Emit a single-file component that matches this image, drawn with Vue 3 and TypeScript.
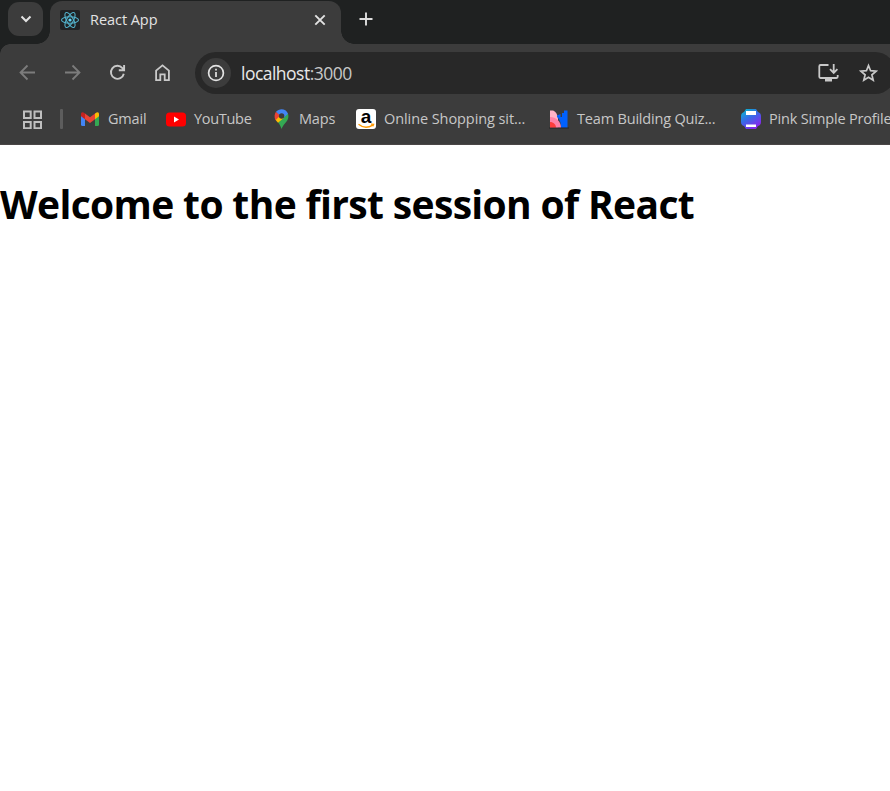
<script setup lang="ts">
interface Bookmark {
  id: string
  label: string
  width: number
}

const bookmarks: Bookmark[] = [
  { id: 'gmail', label: 'Gmail', width: 86 },
  { id: 'youtube', label: 'YouTube', width: 105 },
  { id: 'maps', label: 'Maps', width: 85 },
  { id: 'amazon', label: 'Online Shopping sit...', width: 193 },
  { id: 'quiz', label: 'Team Building Quiz...', width: 192 },
  { id: 'profile', label: 'Pink Simple Profile', width: 160 },
]
</script>

<template>
  <div class="browser">
    <header class="tab-strip">
      <button class="tab-search" aria-label="Search tabs">
        <svg width="12" height="8" viewBox="0 0 12 8"><path d="M1.500 1.500 6 6l4.500-4.500" fill="none" stroke="#e3e3e3" stroke-width="2" /></svg>
      </button>
      <div class="tab">
        <svg class="favicon" width="20" height="20" viewBox="0 0 20 20">
          <rect width="20" height="20" rx="2" fill="#202224" />
          <g fill="none" stroke="#61dafb" stroke-width="1.100" opacity=".78">
            <ellipse cx="10" cy="10" rx="8.500" ry="3.300" />
            <ellipse cx="10" cy="10" rx="8.500" ry="3.300" transform="rotate(60 10 10)" />
            <ellipse cx="10" cy="10" rx="8.500" ry="3.300" transform="rotate(120 10 10)" />
          </g>
          <circle cx="10" cy="10" r="1.600" fill="#61dafb" />
        </svg>
        <span class="tab-title">React App</span>
        <svg class="close" width="12" height="12" viewBox="0 0 12 12"><path d="m1.300 1.300 9.400 9.400m0-9.400-9.400 9.400" stroke="#e3e3e3" stroke-width="1.900" /></svg>
      </div>
      <svg class="new-tab" width="14" height="14" viewBox="0 0 14 14"><path d="M7 .5v13M.5 7h13" stroke="#dedede" stroke-width="1.900" /></svg>
    </header>

    <div class="toolbar">
      <nav class="nav">
        <svg width="20" height="20" viewBox="0 0 20 20" fill="none" stroke="#7c7c7c" stroke-width="1.800"><path d="M17 9.500H3M9.500 2.500l-7 7 7 7" /></svg>
        <svg width="20" height="20" viewBox="0 0 20 20" fill="none" stroke="#7c7c7c" stroke-width="1.800"><path d="M2 9.500h14M9.500 2.500l7 7-7 7" /></svg>
        <svg width="20" height="20" viewBox="0 0 20 20" fill="none" stroke="#c9c9c9" stroke-width="1.900"><path d="M15.800 10.700A6.500 6.500 0 1 1 14.400 5.100l1.400 1.700M16.100 2v5.300h-5.300" /></svg>
        <svg width="20" height="20" viewBox="0 0 20 20" fill="none" stroke="#c9c9c9" stroke-width="1.800"><path d="M3.100 17.100V7.600l6.400-5.200 6.400 5.200v9.500h-4.200v-5.700H7.300v5.700z" /></svg>
      </nav>
      <div class="address">
        <span class="site-info">
          <svg width="18" height="18" viewBox="0 0 18 18"><circle cx="9" cy="9" r="7.400" fill="none" stroke="#e3e3e3" stroke-width="1.700" /><path d="M9 8v5M9 4.800v1.800" stroke="#e3e3e3" stroke-width="1.700" /></svg>
        </span>
        <span class="url"><b>localhost</b>:3000</span>
        <svg class="install" width="22" height="20" viewBox="0 0 22 20" fill="none" stroke="#c9c9c9" stroke-width="1.800"><path d="M11.500 2h-8q-1.200 0-1.200 1.200v10.600q0 1.200 1.200 1.200h16q1.200 0 1.200-1.200V12M16.700 1v8.500M13 6.200l3.700 3.700 3.700-3.700" /><path d="M8 15h7v3.500H8z" fill="#c9c9c9" stroke="none" /></svg>
        <svg width="20" height="20" viewBox="0 0 20 20"><path d="m10.500 2.600 2.100 5.100 5.500.5-4.200 3.600 1.300 5.400-4.700-2.900-4.700 2.900 1.300-5.400-4.200-3.600 5.500-.5z" fill="none" stroke="#c9c9c9" stroke-width="1.700" /></svg>
      </div>
    </div>

    <div class="bookmarks">
      <svg class="apps" width="20" height="20" viewBox="0 0 20 20" fill="none" stroke="#bfbfbf" stroke-width="2"><path d="M1 2.500h6.700v6.500H1zM11.500 2.500H18v6.500h-6.500zM1 13h6.700v6.300H1zM11.500 13H18v6.300h-6.500z" /></svg>
      <span class="divider"></span>
      <div v-for="item in bookmarks" :key="item.id" class="bookmark" :class="item.id" :style="{ width: item.width + 'px' }">
        <svg v-if="item.id === 'gmail'" width="20" height="20" viewBox="0 0 20 20">
          <path d="M1 5v10.500Q1 17 2.500 17H5V8z" fill="#4285f4" />
          <path d="M15 8v9h2.500q1.500 0 1.500-1.500V5z" fill="#34a853" />
          <path d="M15 4.500 16.500 3.400Q19 2.500 19 5v2.200l-4 3z" fill="#fbbc04" />
          <path d="M1 7.200V5q0-2.500 2.500-1.600L5 4.500v5.700z" fill="#c5221f" />
          <path d="M5 4.500 10 8.300l5-3.800v5.700l-5 3.800-5-3.800z" fill="#ea4335" />
        </svg>
        <svg v-else-if="item.id === 'youtube'" width="20" height="20" viewBox="0 0 20 20">
          <rect y="3.500" width="20" height="14" rx="3.500" fill="#f00" /><path d="m8 7.500 5 3-5 3z" fill="#fff" />
        </svg>
        <svg v-else-if="item.id === 'maps'" width="20" height="20" viewBox="0 0 20 20">
          <path d="M10.500 20c-1-3-1.600-4.500-3.400-6.500L15 4l2.100 1c1 4-.5 6.500-3 9.300-2 2.200-2.600 3.700-3.600 5.700z" fill="#34a853" />
          <path d="M4.500 10.500 8.500 6l4.500 2.700-6 5c-1.300-1.200-2-2-2.500-3.200z" fill="#fbbc04" />
          <path d="M5 2.700 9.500 6.200l-5 5C3 8 3.400 5 5 2.700z" fill="#ea4335" />
          <path d="M5 2.700C8.200-1 15-.8 17 4.700L12.500 9 9 6.500z" fill="#4285f4" />
          <circle cx="10.600" cy="7" r="2.700" fill="#3c3c3c" />
        </svg>
        <svg v-else-if="item.id === 'amazon'" width="20" height="20" viewBox="0 0 20 20">
          <rect width="20" height="20" rx="3" fill="#fff" />
          <text x="10" y="14.300" text-anchor="middle" class="amazon-letter">a</text>
          <path d="M2.500 15.300c4.500 3.700 10 3.500 14.300.8M15 15.200l2.600.1-.8 2" fill="none" stroke="#f90" stroke-width="1.300" />
        </svg>
        <svg v-else-if="item.id === 'quiz'" width="20" height="20" viewBox="0 0 20 20">
          <path d="M1 1.500h3c3 1 4.500 4.500 5 8v9H1z" fill="#ffb3c7" />
          <path d="M8 6.500 11.500 5v3H13V4h2V1.500h3.500v17.300H12C12 13 10.500 10 8 8z" fill="#0061ff" />
          <path d="M1 8c6 0 11 4.500 11 10.800H1z" fill="#ff82a8" />
          <path d="M1 13c3.500 0 6 2.500 6 5.800H1z" fill="#ff3d3d" />
          <path d="M0 19h20" stroke="#202020" stroke-width=".8" />
        </svg>
        <svg v-else width="20" height="20" viewBox="0 0 20 20">
          <defs><linearGradient id="print" x1="0" y1="0" x2=".65" y2="1"><stop stop-color="#00c4cc" /><stop offset=".5" stop-color="#3769e8" /><stop offset="1" stop-color="#8b24ed" /></linearGradient></defs>
          <path d="M5 0h10l2 3q3 1 3 4v6q0 3-3 4l-2 3H5l-2-3q-3-1-3-4V7q0-3 3-4z" fill="url(#print)" />
          <path d="M5 2h10v4H5zM5 15.500h10V18H5z" fill="#fff" />
        </svg>
        <span>{{ item.label }}</span>
      </div>
    </div>

    <main class="page"><h1>Welcome to the first session of React</h1></main>
  </div>
</template>

<style>
body { margin: 0; overflow: hidden; background: #fff; }
</style>

<style scoped>
.browser {
  width: 100%;
  height: 791px;
  overflow: hidden;
  background: #fff;
  font-family: "Open Sans", "Noto Sans", sans-serif;
}
svg { display: block; flex: none; }
.tab-strip {
  display: flex;
  align-items: flex-start;
  height: 44px;
  background: #1f2121;
}
.tab-search {
  display: flex;
  align-items: center;
  justify-content: center;
  width: 35px;
  height: 34px;
  margin: 2px 7px 0 8px;
  padding: 0;
  border: 0;
  border-radius: 11px;
  background: #3c3c3c;
}
.tab {
  position: relative;
  box-sizing: border-box;
  display: flex;
  align-items: center;
  width: 291px;
  height: 43px;
  margin-top: 1px;
  padding: 0 15px 6px 10px;
  border-radius: 12px 12px 0 0;
  background: #3c3c3c;
}
.tab::before, .tab::after {
  content: "";
  position: absolute;
  bottom: 0;
  width: 13px;
  height: 13px;
}
.tab::before { right: 100%; background: radial-gradient(circle at 0 0, transparent 12.5px, #3c3c3c 13px); }
.tab::after { left: 100%; background: radial-gradient(circle at 100% 0, transparent 12.5px, #3c3c3c 13px); }
.tab-title {
  flex: 1;
  margin-left: 10px;
  color: #e3e3e3;
  font-size: 14.500px;
  letter-spacing: -0.05px;
}
.new-tab { margin: 12px 0 0 18px; }
.toolbar {
  display: flex;
  align-items: center;
  height: 58px;
  background: radial-gradient(circle at 10px 10px, #3c3c3c 9.5px, #1f2121 10px) 0 0 / 10px 10px no-repeat #3c3c3c;
}
.nav { display: flex; gap: 25px; margin-left: 18px; }
.address {
  box-sizing: border-box;
  display: flex;
  flex: none;
  align-items: center;
  width: 701px;
  height: 42px;
  margin-left: 22px;
  padding: 0 18px 0 6px;
  border-radius: 21px;
  background: #282828;
}
.site-info {
  display: flex;
  align-items: center;
  justify-content: center;
  width: 30px;
  height: 30px;
  border-radius: 50%;
  background: #3c3c3c;
}
.url {
  flex: 1;
  margin-left: 10px;
  color: #c7c7c7;
  font-size: 17.500px;
  letter-spacing: -0.52px;
}
.url b { color: #e8e8e8; font-weight: 400; }
.install { margin-right: 19px; }
.bookmarks {
  box-sizing: border-box;
  display: flex;
  align-items: center;
  height: 43px;
  padding-bottom: 9px;
  border-bottom: 1px solid #4a4646;
  background: #3c3c3c;
}
.apps { margin-left: 23px; }
.divider {
  flex: none;
  width: 3px;
  height: 20px;
  margin: 0 17px;
  border-radius: 1px;
  background: #5d5d5d;
}
.bookmark {
  display: flex;
  flex: none;
  align-items: center;
  gap: 8px;
  color: #c7c7c7;
  font-size: 14.500px;
  letter-spacing: -0.18px;
  white-space: nowrap;
}
.youtube { letter-spacing: -0.3px; }
.amazon { letter-spacing: -0.08px; }
.amazon-letter {
  fill: #000;
  font: bold 19px "Liberation Sans", sans-serif;
  letter-spacing: 0;
}
.page { padding-top: 32px; }
h1 {
  margin: 0;
  color: #000;
  font-size: 39px;
  line-height: 54px;
  letter-spacing: -0.65px;
  white-space: nowrap;
}
</style>
